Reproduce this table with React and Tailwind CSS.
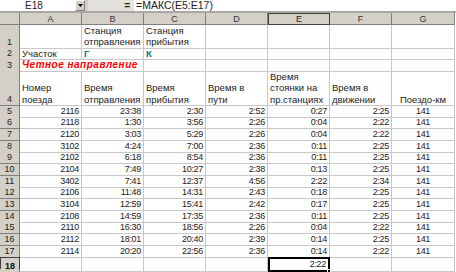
import React from "react";

const COLS = ["A", "B", "C", "D", "E", "F", "G"];
const DATA = [
  [5, "2116", "23:38", "2:30", "2:52", "0:27", "2:25", "141"],
  [6, "2118", "1:30", "3:56", "2:26", "0:04", "2:22", "141"],
  [7, "2120", "3:03", "5:29", "2:26", "0:04", "2:22", "141"],
  [8, "3102", "4:24", "7:00", "2:36", "0:11", "2:25", "141"],
  [9, "2102", "6:18", "8:54", "2:36", "0:11", "2:25", "141"],
  [10, "2104", "7:49", "10:27", "2:38", "0:13", "2:25", "141"],
  [11, "3402", "7:41", "12:37", "4:56", "2:22", "2:34", "141"],
  [12, "2106", "11:48", "14:31", "2:43", "0:18", "2:25", "141"],
  [13, "3104", "12:59", "15:41", "2:42", "0:17", "2:25", "141"],
  [14, "2108", "14:59", "17:35", "2:36", "0:11", "2:25", "141"],
  [15, "2110", "16:30", "18:56", "2:26", "0:04", "2:22", "141"],
  [16, "2112", "18:01", "20:40", "2:39", "0:14", "2:25", "141"],
  [17, "2114", "20:20", "22:56", "2:36", "0:14", "2:22", "141"],
];

const rowCls = "grid grid-cols-[20px_62px_62px_62px_62px_62px_62px_63px]";
const cell = "border-r border-b border-[#c8c8c8] px-[2px] flex items-end overflow-visible whitespace-nowrap";
const rowHead =
  "bg-[#d4d0c8] border-r border-b border-[#808080] flex items-end justify-center text-[9px] text-[#222]";
const num = "text-[9px] tracking-[-0.3px] leading-[11px] text-[#222]";
const txt = "text-[9.5px] leading-[11.5px] text-[#222]";

function Wrap({ lines }) {
  return (
    <div className={txt}>
      {lines.map((l, i) => (
        <div key={i}>{l}</div>
      ))}
    </div>
  );
}

export default function App() {
  return (
    <div className="w-[456px] h-[272px] overflow-hidden bg-white font-['Liberation_Sans',Arial,sans-serif] select-none">
      {/* formula bar */}
      <div className="grid grid-cols-[75px_10px_3px_46px_322px] h-[11px] bg-[#d4d0c8]">
        <div className="bg-white flex items-center justify-start pl-[25px] text-[10px] leading-[11px] text-[#222]">
          <span>E18</span>
        </div>
        <div className="bg-[#d4d0c8] border-t border-l border-white border-r border-b border-r-[#808080] border-b-[#808080] flex items-center justify-center">
          <svg width="5" height="3" viewBox="0 0 5 3">
            <path d="M0 0h5L2.5 3z" fill="#000" />
          </svg>
        </div>
        <div />
        <div className="bg-[#e4e2dc] flex items-center justify-end pr-[4px]">
          <span className="text-[10px] font-bold leading-[11px] text-[#222]">=</span>
        </div>
        <div className="bg-white flex items-center pl-[2px] text-[10.5px] leading-[11px] text-[#222] whitespace-nowrap">
          <span>=МАКС(E5:E17)</span>
        </div>
      </div>
      <div className="h-[2px] bg-[#a8a8a8]" />

      {/* column headers */}
      <div className={rowCls + " h-[11.5px]"}>
        <div className="bg-[#d4d0c8] border-r border-b border-[#808080]" />
        {COLS.map((c) => (
          <div
            key={c}
            className={
              c === "E"
                ? "bg-[#d4d0c8] border border-[#404040] flex items-center justify-center text-[9px] leading-[10px] text-[#222]"
                : "bg-[#d4d0c8] border-r border-b border-[#808080] flex items-center justify-center text-[9px] leading-[10px] text-[#333]"
            }
          >
            {c}
          </div>
        ))}
      </div>

      {/* row 1 */}
      <div className={rowCls + " h-[23px]"}>
        <div className={rowHead}>
          <span className="leading-[11px]">1</span>
        </div>
        <div className={cell} />
        <div className={cell}>
          <Wrap lines={["Станция", "отправления"]} />
        </div>
        <div className={cell}>
          <Wrap lines={["Станция", "прибытия"]} />
        </div>
        <div className={cell} />
        <div className={cell} />
        <div className={cell} />
        <div className={cell} />
      </div>

      {/* row 2 */}
      <div className={rowCls + " h-[11.5px]"}>
        <div className={rowHead}>
          <span className="leading-[11px]">2</span>
        </div>
        <div className={cell}>
          <span className={txt}>Участок</span>
        </div>
        <div className={cell}>
          <span className="text-[9.5px] leading-[11.5px] font-bold text-[#008080]">Г</span>
        </div>
        <div className={cell}>
          <span className="text-[9.5px] leading-[11.5px] font-bold text-[#008080]">К</span>
        </div>
        <div className={cell} />
        <div className={cell} />
        <div className={cell} />
        <div className={cell} />
      </div>

      {/* row 3 */}
      <div className={rowCls + " h-[11.5px]"}>
        <div className={rowHead}>
          <span className="leading-[11px]">3</span>
        </div>
        <div className="border-b border-[#c8c8c8] px-[2px] flex items-end whitespace-nowrap overflow-visible relative z-10">
          <span className="text-[10px] tracking-[0.5px] leading-[11.5px] font-bold italic text-[#ff0000]">
            Четное направление
          </span>
        </div>
        <div className={cell} />
        <div className={cell} />
        <div className={cell} />
        <div className={cell} />
        <div className={cell} />
        <div className={cell} />
      </div>

      {/* row 4 */}
      <div className={rowCls + " h-[35px]"}>
        <div className={rowHead}>
          <span className="leading-[11px]">4</span>
        </div>
        <div className={cell}>
          <Wrap lines={["Номер", "поезда"]} />
        </div>
        <div className={cell}>
          <Wrap lines={["Время", "отправления"]} />
        </div>
        <div className={cell}>
          <Wrap lines={["Время", "прибытия"]} />
        </div>
        <div className={cell}>
          <Wrap lines={["Время в", "пути"]} />
        </div>
        <div className={cell}>
          <Wrap lines={["Время", "стоянки на", "пр.станциях"]} />
        </div>
        <div className={cell}>
          <Wrap lines={["Время в", "движении"]} />
        </div>
        <div className={cell + " justify-center"}>
          <Wrap lines={["Поездо-км"]} />
        </div>
      </div>

      {/* data rows */}
      {DATA.map((r) => (
        <div key={r[0]} className={rowCls + " h-[11.7px]"}>
          <div className={rowHead}>
            <span className="leading-[11px]">{r[0]}</span>
          </div>
          {r.slice(1).map((v, i) => (
            <div key={i} className={cell + (i === 6 ? " justify-center" : " justify-end")}>
              <span className={num}>{v}</span>
            </div>
          ))}
        </div>
      ))}

      {/* row 18 */}
      <div className={rowCls + " h-[11.7px]"}>
        <div className="bg-[#d4d0c8] border border-[#404040] flex items-end justify-center text-[9px] font-bold text-[#111]">
          <span className="leading-[10px]">18</span>
        </div>
        <div className={cell} />
        <div className={cell} />
        <div className={cell} />
        <div className={cell} />
        <div className="relative border-2 border-black flex items-end justify-end px-[2px]">
          <span className={num}>2:22</span>
          <div className="absolute -right-[3px] -bottom-[3px] w-[4px] h-[4px] bg-black border border-white" />
        </div>
        <div className={cell} />
        <div className={cell} />
      </div>

      {/* row 19 (partially visible) */}
      <div className={rowCls + " h-[11.7px]"}>
        <div className={rowHead} />
        <div className={cell} />
        <div className={cell} />
        <div className={cell} />
        <div className={cell} />
        <div className={cell} />
        <div className={cell} />
        <div className={cell} />
      </div>
    </div>
  );
}
